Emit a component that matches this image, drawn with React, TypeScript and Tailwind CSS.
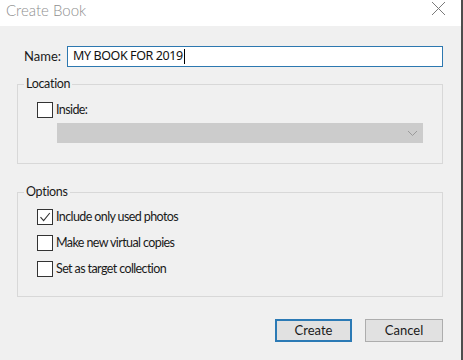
import * as React from "react";

const font = { fontFamily: 'Lato, "Noto Sans", sans-serif' };

function Checkbox({ checked }: { checked?: boolean }) {
  return (
    <span className="flex h-[16px] w-[16px] shrink-0 items-center justify-center border border-[#333333] bg-white">
      {checked ? (
        <svg width="14" height="14" viewBox="0 0 14 14" fill="none">
          <path d="M2.5 7.2 L5.6 10.6 L11.8 3" stroke="#333333" strokeWidth="1.1" />
        </svg>
      ) : null}
    </span>
  );
}

function CheckRow({ label, checked }: { label: string; checked?: boolean }) {
  return (
    <label className="flex h-[16px] items-center gap-[3px] text-[12.5px] tracking-[-0.6px] text-[#1a1a1a]">
      <Checkbox checked={checked} />
      <span>{label}</span>
    </label>
  );
}

function GroupBox({ title, children, className }: { title: string; children: React.ReactNode; className: string }) {
  return (
    <fieldset className={`border border-[#d8d8d8] ${className}`}>
      <legend className="ml-[6px] px-[2px] text-[12.5px] leading-[16px] tracking-[-0.3px] text-[#1a1a1a]">{title}</legend>
      <div className="px-[19px]">{children}</div>
    </fieldset>
  );
}

export default function App() {
  return (
    <div className="flex h-[360px] w-[463px] bg-[#f0f0f0]" style={font}>
      <div className="flex min-w-0 flex-1 flex-col">
        <div className="flex h-[26px] items-start justify-between bg-white pl-[6px] pr-[15px] pt-[1px]">
          <span className="text-[15px] font-light leading-[18px] text-[#8f8f8f]">Create Book</span>
          <svg width="15" height="15" viewBox="0 0 15 15">
            <path d="M1 1 L14 14 M14 1 L1 14" stroke="#7a7a7a" strokeWidth="1" />
          </svg>
        </div>

        <div className="flex flex-col pl-[17px] pr-[18px] pt-[20px]">
          <div className="flex items-center">
            <span className="w-[50px] pl-[7px] text-[13px] text-[#1a1a1a]">Name:</span>
            <div
              className="flex h-[21px] flex-1 items-center border border-[#2d78b0] bg-white pl-[5px] text-[12.5px] tracking-[-0.4px] text-[#111111]"
              style={{ fontFamily: '"Noto Sans", sans-serif' }}
            >
              MY BOOK FOR 2019
              <span className="ml-[1px] h-[15px] w-[1px] bg-black" />
            </div>
          </div>

          <GroupBox title="Location" className="mt-[9px] pb-[20px] pt-[10px]">
            <CheckRow label="Inside:" />
            <div className="ml-[20px] mt-[5px] flex h-[20px] items-center justify-end bg-[#cccccc] pr-[5px]">
              <svg width="11" height="7" viewBox="0 0 11 7" fill="none">
                <path d="M1 1 L5.5 5.5 L10 1" stroke="#9a9a9a" strokeWidth="1" />
              </svg>
            </div>
          </GroupBox>

          <GroupBox title="Options" className="mt-[20px] pb-[19px] pt-[9px]">
            <div className="flex flex-col gap-[10px]">
              <CheckRow label="Include only used photos" checked />
              <CheckRow label="Make new virtual copies" />
              <CheckRow label="Set as target collection" />
            </div>
          </GroupBox>

          <div className="mt-[22px] flex justify-end gap-[13px]">
            <button
              type="button"
              className="h-[23px] w-[77px] border-2 border-[#2b7ab5] bg-[#e1e1e1] text-[13px] text-[#1a1a1a]"
            >
              Create
            </button>
            <button
              type="button"
              className="h-[23px] w-[78px] border border-[#adadad] bg-[#e1e1e1] text-[13px] text-[#1a1a1a]"
            >
              Cancel
            </button>
          </div>
        </div>
      </div>
      <div className="w-[2px] bg-[#4d4d4d]" />
    </div>
  );
}
